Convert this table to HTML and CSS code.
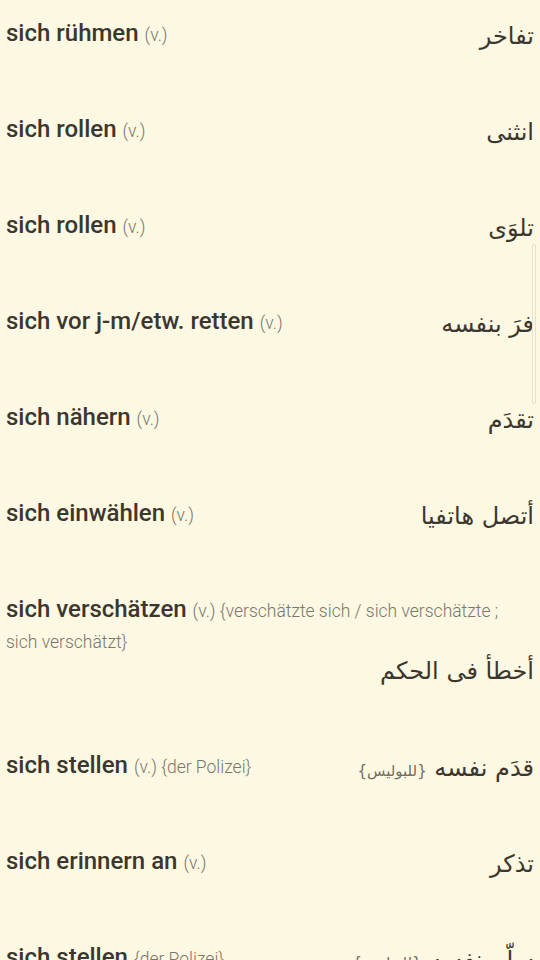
FILE: index.html
```html
<!DOCTYPE html>
<html lang="de">
<head>
    <meta charset="UTF-8">
    <meta name="viewport" content="width=device-width, initial-scale=1.0">
    <title>Wörterbuch</title>
    <link rel="stylesheet" href="styles.css">
</head>
<body>
    <div class="word-list">
        <div class="entry">
            <div class="de"><span class="word">sich rühmen</span> <span class="note">(v.)</span></div>
            <div class="ar">تفاخر</div>
        </div>
        <div class="entry">
            <div class="de"><span class="word">sich rollen</span> <span class="note">(v.)</span></div>
            <div class="ar">انثنى</div>
        </div>
        <div class="entry">
            <div class="de"><span class="word">sich rollen</span> <span class="note">(v.)</span></div>
            <div class="ar">تلوَى</div>
        </div>
        <div class="entry">
            <div class="de"><span class="word">sich vor j-m/etw. retten</span> <span class="note">(v.)</span></div>
            <div class="ar">فرَ بنفسه</div>
        </div>
        <div class="entry">
            <div class="de"><span class="word">sich nähern</span> <span class="note">(v.)</span></div>
            <div class="ar">تقدَم</div>
        </div>
        <div class="entry">
            <div class="de"><span class="word">sich einwählen</span> <span class="note">(v.)</span></div>
            <div class="ar">أتصل هاتفيا</div>
        </div>
        <div class="entry long">
            <div class="de"><span class="word">sich verschätzen</span> <span class="note">(v.) {verschätzte sich / sich verschätzte ;<br>sich verschätzt}</span></div>
            <div class="ar">أخطأ فى الحكم</div>
        </div>
        <div class="entry">
            <div class="de"><span class="word">sich stellen</span> <span class="note">(v.) {der Polizei}</span></div>
            <div class="ar">قدَم نفسه <span class="ar-note">{للبوليس}</span></div>
        </div>
        <div class="entry">
            <div class="de"><span class="word">sich erinnern an</span> <span class="note">(v.)</span></div>
            <div class="ar">تذكر</div>
        </div>
        <div class="entry">
            <div class="de"><span class="word">sich stellen</span> <span class="note">{der Polizei}</span></div>
            <div class="ar">سلّم نفسه <span class="ar-note">{للبوليس}</span></div>
        </div>
    </div>
    <div class="scroll-thumb"></div>
</body>
</html>
```

FILE: styles.css
```css
body {
    margin: 0;
    background-color: #fdf8e2;
    font-family: 'Roboto', 'Noto Sans', sans-serif;
    color: #3b372e;
    overflow: hidden;
    height: 960px;
}

.word-list {
    display: flex;
    flex-direction: column;
}

.entry {
    display: flex;
    justify-content: space-between;
    align-items: flex-start;
    height: 30px;
    padding: 18px 6px 48px 6px;
    line-height: 30px;
}

.entry.long {
    flex-direction: column;
    align-items: stretch;
    height: 90px;
}

.entry.long .de {
    line-height: 31px;
}

.entry.long .ar {
    text-align: right;
    top: 0;
}

.de {
    font-size: 24px;
    white-space: nowrap;
}

.word {
    font-weight: 500;
}

.note {
    font-size: 17.5px;
    font-weight: 300;
    line-height: 20px;
    color: #7a766c;
}

.ar {
    direction: rtl;
    font-family: 'DejaVu Sans', sans-serif;
    font-size: 24px;
    color: #3b372e;
    white-space: nowrap;
    position: relative;
    top: 3px;
}

.ar-note {
    font-size: 15px;
    line-height: 20px;
    color: #6f6b62;
}

.scroll-thumb {
    position: absolute;
    top: 244px;
    right: 4px;
    width: 2px;
    height: 158px;
    border: 1px solid #e6e1cc;
    border-radius: 3px;
}
```
